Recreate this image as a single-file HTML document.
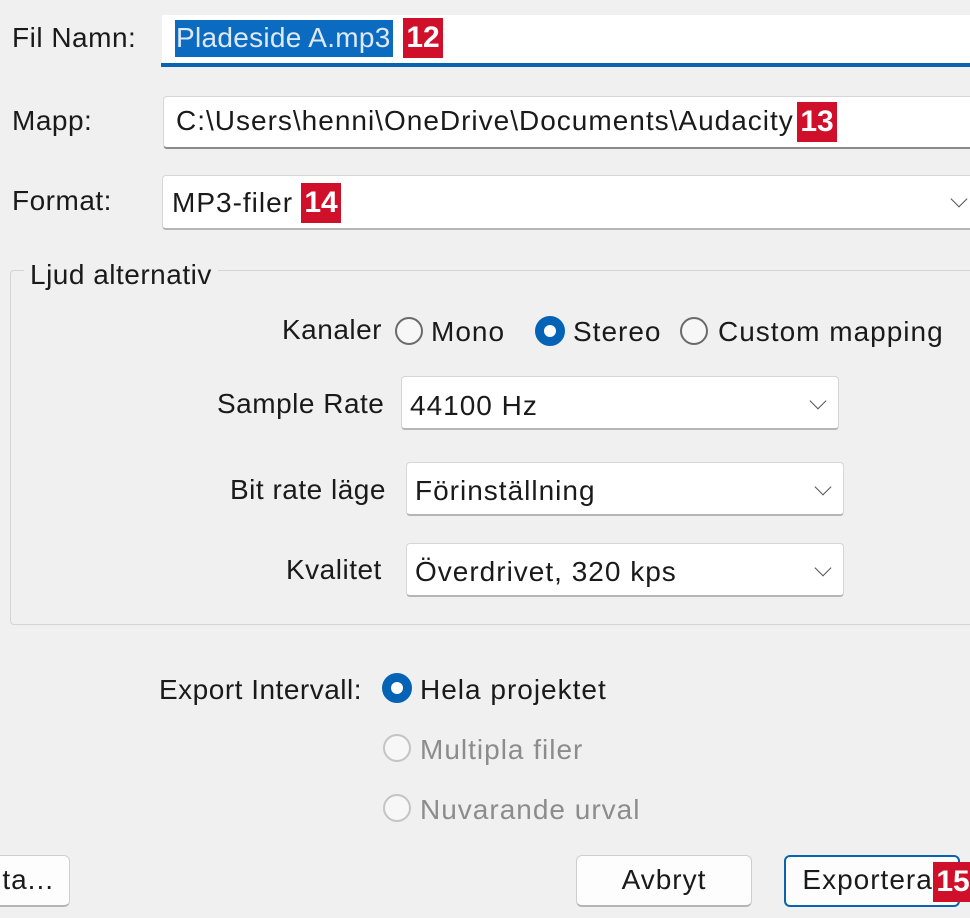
<!DOCTYPE html>
<html><head><meta charset="utf-8"><style>
body{margin:0;width:970px;height:918px;background:#f0f0f0;position:relative;overflow:hidden;font-family:"Liberation Sans",sans-serif;font-size:28px;letter-spacing:1px;color:#1a1a1a}
.a{position:absolute;white-space:nowrap}
.box{position:absolute;background:#fff;border:1px solid #d6d6d6;border-bottom:2px solid #8a8a8a;border-radius:4px;box-sizing:border-box}
.badge{position:absolute;background:#d0102a;color:#fff;font-weight:bold;font-size:30px;letter-spacing:0;line-height:40px;text-align:center;width:40px;height:40px}
.chev{position:absolute;width:11px;height:11px;border-right:1.5px solid #555;border-bottom:1.5px solid #555;transform:rotate(45deg)}
.r{position:absolute;width:28px;height:28px;border:2px solid #6a6a6a;border-radius:50%;box-sizing:border-box;background:#f7f7f7}
.rs{position:absolute;width:30px;height:30px;border-radius:50%;background:#0563b5;box-sizing:border-box;border:9px solid #0563b5}
.rs:after{content:"";position:absolute;left:0;top:0;width:12px;height:12px;border-radius:50%;background:#fff}
.rd{border-color:#c4c4c4}
.dis{color:#8c8c8c}
.lb{letter-spacing:0.5px}
.btn{position:absolute;background:#fdfdfd;border:1px solid #cfcfcf;border-bottom:2px solid #b5b5b5;border-radius:6px;box-sizing:border-box;text-align:center;line-height:48px}
</style></head><body>
<div class="a lb" style="left:12px;top:22px">Fil Namn:</div>
<div class="a" style="left:162px;top:15px;width:820px;height:51px;background:#fff"></div>
<div class="a" style="left:161px;top:63px;width:820px;height:4px;background:#0a63b0"></div>
<div class="a" style="left:175px;top:20px;width:218px;height:37px;background:#0b6bc1"></div>
<div class="a" style="left:176px;top:22px;color:#dfe9f5;letter-spacing:0.3px">Pladeside A.mp3</div>
<div class="badge" style="left:403px;top:18px">12</div>

<div class="a lb" style="left:12px;top:105px">Mapp:</div>
<div class="box" style="left:163px;top:96px;width:820px;height:53px"></div>
<div class="a" style="left:176px;top:105px">C:\Users\henni\OneDrive\Documents\Audacity</div>
<div class="badge" style="left:797px;top:102px">13</div>

<div class="a lb" style="left:12px;top:185px">Format:</div>
<div class="box" style="left:162px;top:175px;width:820px;height:55px;border-bottom:2px solid #b5b5b5"></div>
<div class="a" style="left:172px;top:187px">MP3-filer</div>
<div class="badge" style="left:301px;top:183px">14</div>
<div class="chev" style="left:953px;top:193px"></div>

<div class="a" style="left:10px;top:270px;width:980px;height:355px;border:1px solid #d4d4d4;border-radius:4px;box-sizing:border-box"></div>
<div class="a lb" style="left:24px;top:259px;background:#f0f0f0;padding:0 6px">Ljud alternativ</div>

<div class="a lb" style="left:282px;top:314px">Kanaler</div>
<div class="r" style="left:395px;top:317px"></div>
<div class="a" style="left:431px;top:316px">Mono</div>
<div class="rs" style="left:535px;top:316px"></div>
<div class="a" style="left:573px;top:316px">Stereo</div>
<div class="r" style="left:680px;top:317px"></div>
<div class="a" style="left:718px;top:316px">Custom mapping</div>

<div class="a lb" style="left:217px;top:388px">Sample Rate</div>
<div class="box" style="left:401px;top:376px;width:438px;height:54px;border-bottom:2px solid #b5b5b5"></div>
<div class="a" style="left:410px;top:390px">44100 Hz</div>
<div class="chev" style="left:812px;top:395px"></div>

<div class="a lb" style="left:230px;top:474px">Bit rate läge</div>
<div class="box" style="left:406px;top:462px;width:438px;height:54px;border-bottom:2px solid #b5b5b5"></div>
<div class="a" style="left:415px;top:475px">Förinställning</div>
<div class="chev" style="left:817px;top:481px"></div>

<div class="a lb" style="left:286px;top:554px">Kvalitet</div>
<div class="box" style="left:406px;top:543px;width:438px;height:54px;border-bottom:2px solid #b5b5b5"></div>
<div class="a" style="left:415px;top:556px">Överdrivet, 320 kps</div>
<div class="chev" style="left:817px;top:562px"></div>

<div class="a lb" style="left:159px;top:674px">Export Intervall:</div>
<div class="rs" style="left:382px;top:673px"></div>
<div class="a" style="left:420px;top:674px">Hela projektet</div>
<div class="r rd" style="left:383px;top:734px"></div>
<div class="a dis" style="left:420px;top:734px">Multipla filer</div>
<div class="r rd" style="left:383px;top:794px"></div>
<div class="a dis" style="left:420px;top:794px">Nuvarande urval</div>

<div class="btn" style="left:-40px;top:855px;width:110px;height:52px">&nbsp;&nbsp;&nbsp;ta...</div>
<div class="btn" style="left:576px;top:855px;width:176px;height:52px">Avbryt</div>
<div class="btn" style="left:784px;top:855px;width:176px;height:52px;border:2px solid #0a63b0;line-height:46px">Exportera&nbsp;</div>
<div class="badge" style="left:933px;top:862px;width:40px">15</div>
</body></html>
